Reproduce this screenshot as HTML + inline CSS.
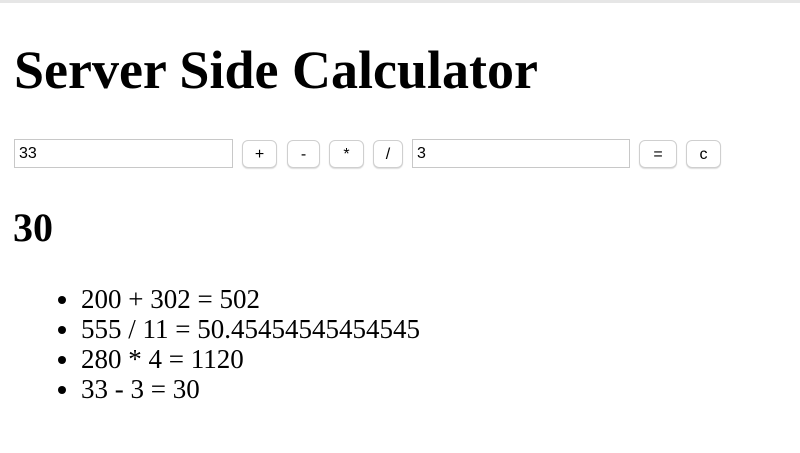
<!DOCTYPE html>
<html><head><style>
body{margin:0;width:800px;height:453px;background:#fff;font-family:"Liberation Serif",serif;color:#000;overflow:hidden;position:relative}
.top{position:absolute;top:0;left:0;width:800px;height:3px;background:#e6e6e6}
h1{position:absolute;left:14px;top:40px;margin:0;font-size:54px;font-weight:bold;line-height:60px}
.in{position:absolute;top:139px;height:29px;border:1px solid #c8c8c8;box-sizing:border-box;font:16px "Liberation Sans",sans-serif;padding:6px 4px;line-height:16px}
.b{position:absolute;top:140px;height:28px;border:1px solid #cfcfcf;border-radius:6px;box-sizing:border-box;font:16px "Liberation Sans",sans-serif;text-align:center;line-height:28px;background:#fff;box-shadow:0 1px 1px #ddd}
h2{position:absolute;left:13px;top:204px;margin:0;font-size:40px;line-height:48px;font-weight:bold}
ul{position:absolute;left:41px;top:284px;margin:0;padding-left:40px;font-size:27px;line-height:30px}
</style></head><body>
<div class="top"></div>
<h1>Server Side Calculator</h1>
<div class="in" style="left:14px;width:219px">33</div>
<div class="b" style="left:242px;width:35px">+</div>
<div class="b" style="left:287px;width:33px">-</div>
<div class="b" style="left:329px;width:35px">*</div>
<div class="b" style="left:373px;width:30px">/</div>
<div class="in" style="left:412px;width:218px">3</div>
<div class="b" style="left:639px;width:38px">=</div>
<div class="b" style="left:686px;width:35px">c</div>
<h2>30</h2>
<ul><li>200 + 302 = 502</li><li>555 / 11 = 50.45454545454545</li><li>280 * 4 = 1120</li><li>33 - 3 = 30</li></ul>
</body></html>
